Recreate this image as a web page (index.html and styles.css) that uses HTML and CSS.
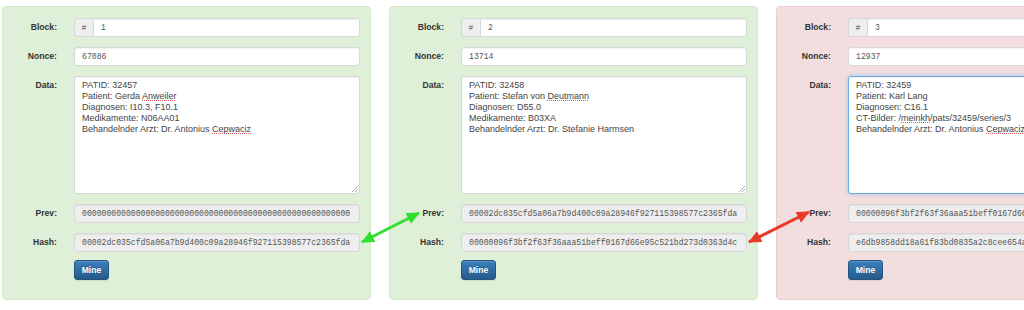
FILE: index.html
```html
<!DOCTYPE html>
<html lang="de">
<head>
<meta charset="utf-8">
<title>Blockchain</title>
<link rel="stylesheet" href="styles.css">
</head>
<body>
<div class="chain">
  <div class="card ok">
    <div class="form">
      <label class="lbl">Block:</label>
      <div class="group"><span class="addon">#</span><input class="field grouped" readonly value="1"></div>
      <label class="lbl">Nonce:</label>
      <input class="field" readonly value="67086">
      <label class="lbl">Data:</label>
      <div class="area">PATID: 32457<br>Patient: Gerda <span class="sp">Anweiler</span><br>Diagnosen: I10.3, F10.1<br>Medikamente: N06AA01<br>Behandelnder Arzt: Dr. Antonius <span class="sp">Cepwaciz</span></div>
      <label class="lbl">Prev:</label>
      <input class="field ro" readonly value="0000000000000000000000000000000000000000000000000000000">
      <label class="lbl">Hash:</label>
      <input class="field ro" readonly value="00002dc035cfd5a06a7b9d400c09a28946f927115398577c2365fda">
      <span></span>
      <button class="btn">Mine</button>
    </div>
  </div>
  <div class="card ok">
    <div class="form">
      <label class="lbl">Block:</label>
      <div class="group"><span class="addon">#</span><input class="field grouped" readonly value="2"></div>
      <label class="lbl">Nonce:</label>
      <input class="field" readonly value="13714">
      <label class="lbl">Data:</label>
      <div class="area">PATID: 32458<br>Patient: Stefan von <span class="sp">Deutmann</span><br>Diagnosen: D55.0<br>Medikamente: B03XA<br>Behandelnder Arzt: Dr. Stefanie Harmsen</div>
      <label class="lbl">Prev:</label>
      <input class="field ro" readonly value="00002dc035cfd5a06a7b9d400c09a28946f927115398577c2365fda">
      <label class="lbl">Hash:</label>
      <input class="field ro" readonly value="00000096f3bf2f63f36aaa51beff0167d66e95c521bd273d0363d4c">
      <span></span>
      <button class="btn">Mine</button>
    </div>
  </div>
  <div class="card bad">
    <div class="form">
      <label class="lbl">Block:</label>
      <div class="group"><span class="addon">#</span><input class="field grouped" readonly value="3"></div>
      <label class="lbl">Nonce:</label>
      <input class="field" readonly value="12937">
      <label class="lbl">Data:</label>
      <div class="area focus">PATID: 32459<br>Patient: Karl Lang<br>Diagnosen: C16.1<br>CT-Bilder: /<span class="sp">meinkh</span>/pats/32459/series/3<br>Behandelnder Arzt: Dr. Antonius <span class="sp">Cepwaciz</span></div>
      <label class="lbl">Prev:</label>
      <input class="field ro" readonly value="00000096f3bf2f63f36aaa51beff0167d66e95c521bd273d0363d4c">
      <label class="lbl">Hash:</label>
      <input class="field ro" readonly value="e6db9858dd18a61f83bd0835a2c8cee654a0b1c2d3e4f5061728394">
      <span></span>
      <button class="btn">Mine</button>
    </div>
  </div>
</div>
<svg class="arrows" width="1024" height="310" viewBox="0 0 1024 310" aria-hidden="true">
  <defs>
    <marker id="hg" markerUnits="userSpaceOnUse" markerWidth="13" markerHeight="13" refX="12" refY="6.5" orient="auto-start-reverse">
      <path d="M0,0.5 L13,6.5 L0,12.5 Z" fill="#2fe02f"/>
    </marker>
    <marker id="hr" markerUnits="userSpaceOnUse" markerWidth="13" markerHeight="13" refX="12" refY="6.5" orient="auto-start-reverse">
      <path d="M0,0.5 L13,6.5 L0,12.5 Z" fill="#e8392b"/>
    </marker>
  </defs>
  <line x1="362" y1="242" x2="419" y2="213" stroke="#2fe02f" stroke-width="3" marker-start="url(#hg)" marker-end="url(#hg)"/>
  <line x1="749" y1="242" x2="809" y2="212" stroke="#e8392b" stroke-width="3" marker-start="url(#hr)" marker-end="url(#hr)"/>
</svg>
</body>
</html>
```
FILE: styles.css
```css
html, body {
  margin: 0;
  padding: 0;
  background: #fff;
}
body {
  width: 1024px;
  height: 310px;
  overflow: hidden;
  position: relative;
  font-family: "Liberation Sans", Arial, sans-serif;
  color: #333;
}
.chain {
  display: flex;
  gap: 18px;
  padding: 6px 0 0 2px;
}
.card {
  flex: 0 0 369px;
  box-sizing: border-box;
  width: 369px;
  border: 1px solid #d6e9c6;
  border-radius: 4px;
  background: #dff0d8;
  padding: 11px 10px 19px 0;
}
.card.bad {
  background: #f2dede;
  border-color: #ebccd1;
}
.form {
  display: grid;
  grid-template-columns: 54px 286px;
  column-gap: 17px;
  row-gap: 10px;
  align-items: start;
}
.lbl {
  text-align: right;
  font-weight: bold;
  font-size: 8.6px;
  line-height: 11px;
  padding-top: 4px;
  color: #333;
}
.field {
  box-sizing: border-box;
  width: 286px;
  height: 19px;
  margin: 0;
  border: 1px solid #d7d7d7;
  border-radius: 3px;
  background: #fff;
  padding: 0 7px;
  font-family: "Liberation Mono", "Courier New", monospace;
  font-size: 8.15px;
  color: #555;
  box-shadow: inset 0 1px 1px rgba(0,0,0,0.05);
  outline: none;
}
.field.ro {
  background: #eee;
}
.group {
  display: flex;
  width: 286px;
}
.addon {
  box-sizing: border-box;
  flex: 0 0 19px;
  height: 19px;
  border: 1px solid #d7d7d7;
  border-right: 0;
  border-radius: 3px 0 0 3px;
  background: #eee;
  font-family: "Liberation Mono", "Courier New", monospace;
  font-size: 8px;
  line-height: 17px;
  text-align: center;
  color: #555;
}
.field.grouped {
  width: auto;
  flex: 1;
  border-radius: 0 3px 3px 0;
}
.area {
  position: relative;
  box-sizing: border-box;
  width: 286px;
  height: 118px;
  border: 1px solid #d7d7d7;
  border-radius: 3px;
  background: #fff;
  padding: 3px 7px;
  font-size: 9px;
  line-height: 11px;
  color: #444;
  white-space: nowrap;
  box-shadow: inset 0 1px 1px rgba(0,0,0,0.05);
}
.area::after {
  content: "";
  position: absolute;
  right: 1px;
  bottom: 1px;
  width: 6px;
  height: 6px;
  background: linear-gradient(135deg, transparent 0 42%, #aaa 42% 54%, transparent 54% 70%, #aaa 70% 82%, transparent 82%);
}
.area.focus {
  border-color: #66afe9;
  box-shadow: inset 0 1px 1px rgba(0,0,0,0.05), 0 0 4px rgba(102,175,233,0.6);
}
.sp {
  text-decoration: underline dotted #e05a5a;
  text-decoration-thickness: 1px;
  text-underline-offset: 1px;
}
.btn {
  display: block;
  box-sizing: border-box;
  width: 35px;
  height: 20px;
  margin: -2px 0 0 0;
  padding: 0;
  border: 1px solid #245580;
  border-radius: 3px;
  background: linear-gradient(to bottom, #3a7fbd 0%, #265a88 100%);
  color: #fff;
  font-family: "Liberation Sans", Arial, sans-serif;
  font-weight: bold;
  font-size: 8.6px;
  text-shadow: 0 -1px 0 rgba(0,0,0,0.2);
  box-shadow: inset 0 1px 0 rgba(255,255,255,0.15), 0 1px 1px rgba(0,0,0,0.075);
}
.arrows {
  position: absolute;
  left: 0;
  top: 0;
  pointer-events: none;
}
```
